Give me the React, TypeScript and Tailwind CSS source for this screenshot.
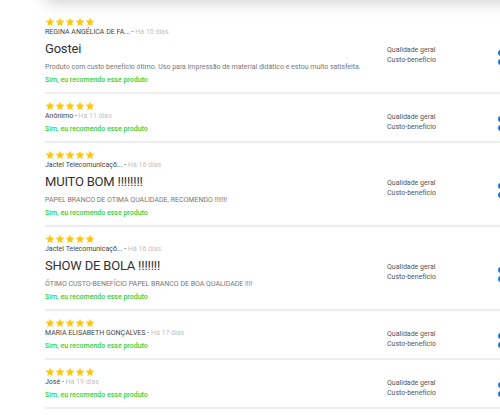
import React from 'react';

// Review data shown in the list
const reviews = [
  {
    name: 'REGINA ANGÉLICA DE FA...',
    date: 'Há 10 dias',
    title: 'Gostei',
    body: 'Produto com custo benefício ótimo. Uso para impressão de material didático e estou muito satisfeita.',
  },
  { name: 'Anônimo', date: 'Há 11 dias' },
  {
    name: 'Jactel Telecomunicaçõ...',
    date: 'Há 16 dias',
    title: 'MUITO BOM !!!!!!!!',
    body: 'PAPEL BRANCO DE OTIMA QUALIDADE, RECOMENDO !!!!!!!',
  },
  {
    name: 'Jactel Telecomunicaçõ...',
    date: 'Há 16 dias',
    title: 'SHOW DE BOLA !!!!!!!',
    body: 'ÓTIMO CUSTO-BENEFÍCIO PAPEL BRANCO DE BOA QUALIDADE !!!!',
  },
  { name: 'MARIA ELISABETH GONÇALVES', date: 'Há 17 dias' },
  { name: 'José', date: 'Há 19 dias' },
];

type Review = { name: string; date: string; title?: string; body?: string };

function Stars() {
  return (
    <div className="flex h-[10px]">
      {[0, 1, 2, 3, 4].map((i) => (
        <svg key={i} width="10" height="10" viewBox="0 0 24 24" className="shrink-0">
          <path
            d="M12 1.5l3.1 7.1 7.6.6-5.8 5 1.8 7.5L12 17.7l-6.7 4 1.8-7.5-5.8-5 7.6-.6z"
            fill="#fcc813"
          />
        </svg>
      ))}
    </div>
  );
}

function ReviewRow({ r }: { r: Review }) {
  return (
    <div className="flex border-b-2 border-[#eeeeee] pt-[7px] pb-[7px]">
      {/* left: stars, author, text */}
      <div className="w-[342px] shrink-0 flex flex-col">
        <Stars />
        <p className="text-[7px] leading-[10px] text-[#444] whitespace-nowrap">
          {r.name} - <span className="text-[#c2c2c2]">{r.date}</span>
        </p>
        {r.title && (
          <h3 className="mt-[3px] text-[13px] leading-[18px] tracking-[-0.2px] text-[#333] whitespace-nowrap">
            {r.title}
          </h3>
        )}
        {r.body && (
          <p className="mt-[4px] text-[7px] leading-[10px] text-[#777] whitespace-nowrap">{r.body}</p>
        )}
        <p className="mt-[3px] text-[7px] leading-[10px] font-medium text-[#33d233] whitespace-nowrap">
          Sim, eu recomendo esse produto
        </p>
      </div>

      {/* right: rating labels */}
      <div className="w-[111px] shrink-0 self-center mt-2 text-[7px] leading-[10px] text-[#555]">
        <p>Qualidade geral</p>
        <p>Custo-benefício</p>
      </div>

      {/* rating bar handles (cut off at the edge) */}
      <div className="self-center mt-[12px] flex flex-col gap-[3px]">
        <span className="block w-[6px] h-[6px] rounded-full bg-[#1a73e8]" />
        <span className="block w-[6px] h-[6px] rounded-full bg-[#1a73e8]" />
      </div>
    </div>
  );
}

export default function App() {
  return (
    <div
      className="w-[500px] h-[415px] overflow-hidden bg-white"
      style={{ fontFamily: 'Roboto, "Liberation Sans", sans-serif' }}
    >
      {/* shadow of the panel above */}
      <div className="ml-[45px] w-[560px] h-[20px] -mt-[20px] bg-white shadow-[0_2px_16px_rgba(0,0,0,0.2)]" />

      <div className="pl-[45px] w-[620px] mt-[10px]">
        {reviews.map((r, i) => (
          <ReviewRow key={i} r={r} />
        ))}
      </div>
    </div>
  );
}
